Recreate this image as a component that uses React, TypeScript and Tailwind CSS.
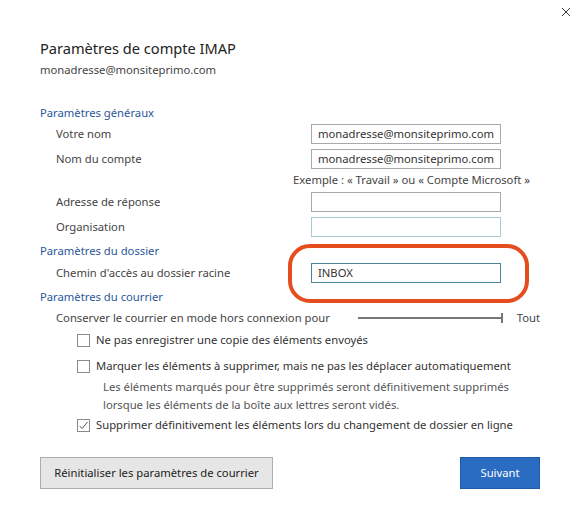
import React from "react";

const font = { fontFamily: '"Segoe UI", "Noto Sans", "Open Sans", sans-serif' };

function Input({ value, border = "border-[#a9a9a9]" }: { value?: string; border?: string }) {
  return (
    <div className={`w-[190px] h-[20px] border ${border} bg-white flex items-center px-[6px] text-[11.25px] text-[#333] whitespace-nowrap`}>
      {value}
    </div>
  );
}

function Row({ label, children }: { label: string; children: React.ReactNode }) {
  return (
    <div className="flex items-center h-[20px] pl-[16px]">
      <div className="w-[255px] text-[11.25px] text-[#444] whitespace-nowrap">{label}</div>
      {children}
    </div>
  );
}

function Checkbox({ checked }: { checked?: boolean }) {
  return (
    <div className="w-[13px] h-[13px] border border-[#8a8a8a] bg-white flex items-center justify-center shrink-0">
      {checked && (
        <svg width="11" height="11" viewBox="0 0 11 11">
          <path d="M1.5 5.8 L4.2 8.5 L9.5 2" fill="none" stroke="#555" strokeWidth="1" />
        </svg>
      )}
    </div>
  );
}

function Heading({ children, className = "" }: { children: React.ReactNode; className?: string }) {
  return <div className={`h-[16px] leading-[16px] text-[11.25px] text-[#2b579a] whitespace-nowrap ${className}`}>{children}</div>;
}

export default function App() {
  return (
    <div className="w-[584px] h-[523px] bg-white flex flex-col" style={font}>
      <div className="flex justify-end pt-[7px] pr-[13px] h-[18px]">
        <svg width="10" height="10" viewBox="0 0 10 10">
          <path d="M1 1 L9 9 M9 1 L1 9" stroke="#333" strokeWidth="1" />
        </svg>
      </div>
      <div className="flex flex-col pl-[40px] pr-[44px]">
        <div className="mt-[19px] h-[22px] leading-[22px] text-[14.6px] text-[#222] whitespace-nowrap">Paramètres de compte IMAP</div>
        <div className="mt-[3px] h-[16px] leading-[16px] text-[11.25px] text-[#444]">monadresse@monsiteprimo.com</div>

        <Heading className="mt-[27px]">Paramètres généraux</Heading>
        <div className="mt-[3px] flex flex-col gap-[5px]">
          <Row label="Votre nom"><Input value="monadresse@monsiteprimo.com" /></Row>
          <Row label="Nom du compte"><Input value="monadresse@monsiteprimo.com" /></Row>
        </div>
        <div className="h-[23px] flex items-center justify-end pr-[10px] text-[11.25px] text-[#444] whitespace-nowrap">
          Exemple : « Travail » ou « Compte Microsoft »
        </div>
        <div className="flex flex-col gap-[5px]">
          <Row label="Adresse de réponse"><Input /></Row>
          <Row label="Organisation"><Input border="border-[#a8cad3]" /></Row>
        </div>

        <Heading className="mt-[6px]">Paramètres du dossier</Heading>
        <div className="relative mt-[4px]">
          <Row label="Chemin d'accès au dossier racine"><Input value="INBOX" border="border-[#4a8796]" /></Row>
          <div className="absolute left-[248px] top-[-19px] w-[241px] h-[59px] border-[4px] border-[#e54d1e] rounded-[22px]" />
        </div>

        <Heading className="mt-[6px]">Paramètres du courrier</Heading>
        <div className="mt-[5px] h-[16px] flex items-center pl-[16px] text-[11.25px] text-[#444] whitespace-nowrap">
          <div className="w-[302px]">Conserver le courrier en mode hors connexion pour</div>
          <div className="flex items-center w-[145px]">
            <div className="flex-1 h-[2px] bg-[#777]" />
            <div className="w-[2px] h-[10px] bg-[#777]" />
          </div>
          <div className="ml-[14px]">Tout</div>
        </div>

        <div className="mt-[6px] flex items-center gap-[6px] pl-[37px] h-[16px] text-[11.25px] text-[#333] whitespace-nowrap">
          <Checkbox />
          <span>Ne pas enregistrer une copie des éléments envoyés</span>
        </div>
        <div className="mt-[10px] flex items-center gap-[6px] pl-[37px] h-[16px] text-[11.25px] text-[#333] whitespace-nowrap">
          <Checkbox />
          <span>Marquer les éléments à supprimer, mais ne pas les déplacer automatiquement</span>
        </div>
        <div className="mt-[4px] pl-[63px] text-[11.25px] leading-[18px] text-[#555] whitespace-nowrap">
          <div>Les éléments marqués pour être supprimés seront définitivement supprimés</div>
          <div>lorsque les éléments de la boîte aux lettres seront vidés.</div>
        </div>
        <div className="mt-[3px] flex items-center gap-[6px] pl-[37px] h-[16px] text-[11.25px] text-[#333] whitespace-nowrap">
          <Checkbox checked />
          <span>Supprimer définitivement les éléments lors du changement de dossier en ligne</span>
        </div>

        <div className="mt-[24px] flex justify-between">
          <div className="w-[233px] h-[32px] bg-[#e6e6e6] border border-[#adadad] flex items-center justify-center text-[11.25px] text-[#222] whitespace-nowrap">
            Réinitialiser les paramètres de courrier
          </div>
          <div className="w-[80px] h-[32px] bg-[#2b6cc3] border border-[#1f5aa6] flex items-center justify-center text-[11.25px] text-white">
            Suivant
          </div>
        </div>
      </div>
    </div>
  );
}
